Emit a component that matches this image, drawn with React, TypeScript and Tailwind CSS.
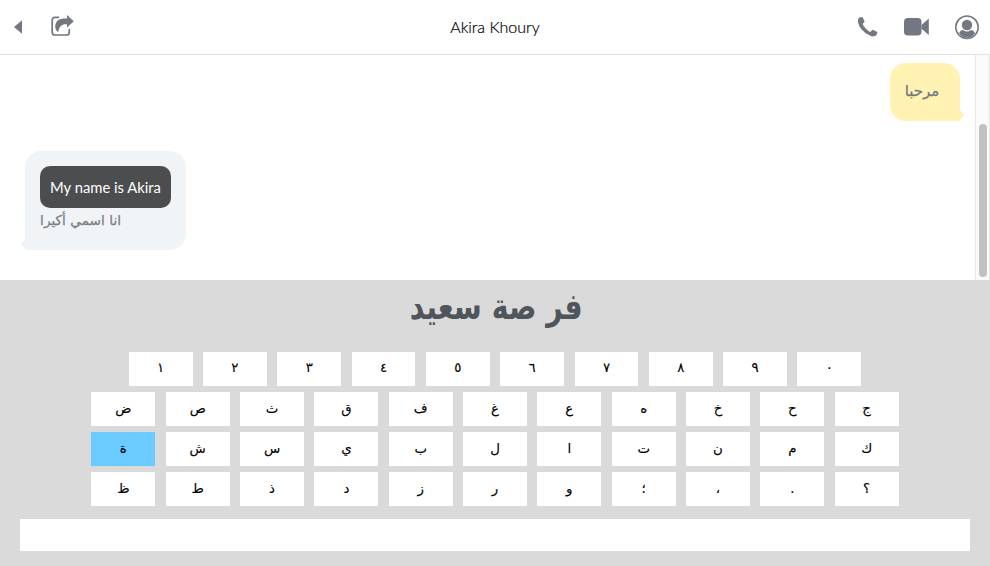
const rows = [
  ['١', '٢', '٣', '٤', '٥', '٦', '٧', '٨', '٩', '٠'],
  ['ض', 'ص', 'ث', 'ق', 'ف', 'غ', 'ع', 'ه', 'خ', 'ح', 'ج'],
  ['ة', 'ش', 'س', 'ي', 'ب', 'ل', 'ا', 'ت', 'ن', 'م', 'ك'],
  ['ظ', 'ط', 'ذ', 'د', 'ز', 'ر', 'و', '؛', '،', '.', '؟'],
];

function Header() {
  return (
    <header className="grid h-[55px] shrink-0 grid-cols-[1fr_auto_1fr] items-center border-b border-[#e2e2e2] bg-white text-[#727781]">
      <div className="flex items-center pl-[14px]">
        <svg width="8" height="14" viewBox="0 0 8 14" fill="currentColor">
          <path d="M8 0.3V13.7L0 7Z" />
        </svg>
        <svg className="ml-[29px] -mt-[2px]" width="23" height="22" viewBox="0 0 23 22">
          <path d="M7.5 2.3H4Q1.2 2.3 1.2 5.1V17.2Q1.2 20 4 20H15.5Q18.3 20 18.3 17.2V14.5" fill="none" stroke="currentColor" strokeWidth="1.7" strokeLinecap="round" />
          <path d="M16 0L22.8 6.3L16 12.6V9.3C11.5 8.8 8.6 10.2 7.1 17.3C3.4 14.5 3.3 8.5 6.8 5.5C9 3.6 12 3.3 16 3.4Z" fill="currentColor" />
        </svg>
      </div>
      <h1 className="font-['Lato'] text-[16px] font-light text-black [-webkit-text-stroke:0.2px_black]">Akira Khoury</h1>
      <div className="flex items-center justify-end pr-[11px]">
        <svg width="20" height="20" viewBox="0 0 20 20" fill="currentColor">
          <path d="M1 .8Q2.5.1 4.1.1Q4.7.3 6.4 4.1Q6.8 5 5.8 5.8Q4.7 6.6 4.7 7.1Q5 8.7 7.9 11.7Q11.1 14.8 12.3 14.8Q12.9 14.7 13.8 13.5Q14.6 12.6 15.3 12.9L18.8 14.8Q19.5 15.2 19.3 16.2Q18.8 18.2 17 18.9Q14.7 19.9 12.4 18.8Q7.5 17 3.7 12.4Q.4 8.4 0 5Q-.2 2 1 .8Z" />
        </svg>
        <svg className="ml-[26px]" width="25" height="18" viewBox="0 0 25 18" fill="currentColor">
          <rect width="17.5" height="17.5" rx="3.8" />
          <path d="M17.5 7L24.8 .5V17L17.5 10.8Z" />
        </svg>
        <svg className="ml-[26px]" width="24" height="25" viewBox="0 0 24 25">
          <circle cx="12" cy="12.3" r="11.2" fill="none" stroke="currentColor" strokeWidth="1.5" />
          <circle cx="12" cy="10" r="5.2" fill="currentColor" />
          <path d="M4 18.3C5 15.7 6.8 15 8.1 15Q12 18.1 15.9 15C17.5 15.1 19 15.8 20 18.3Q16.8 22.8 12 22.8T4 18.3Z" fill="currentColor" />
        </svg>
      </div>
    </header>
  );
}

function Conversation() {
  return (
    <main className="flex h-[225px] shrink-0 bg-white">
      <div className="flex flex-1 flex-col pt-2 pr-[15px] pl-[25px]">
        <div dir="rtl" lang="ar" className="relative flex h-[58px] w-[70px] items-center justify-center self-end rounded-[16px] rounded-br-none bg-[#fff2b3] pb-[2px] font-['DejaVu_Sans',sans-serif] text-[15px] text-[#727781] [-webkit-text-stroke:0.25px_#727781]">
          <span className="pr-[6px]">مرحبا</span>
          <svg className="absolute bottom-0 -right-[4px]" width="5" height="12" viewBox="0 0 5 12" fill="#fff2b3"><path d="M0 0L5 6L0 12Z" /></svg>
        </div>
        <div className="relative mt-[30px] h-[99px] w-[161px] rounded-[16px] rounded-bl-none bg-[#f0f4f7] px-[15px] pt-[15px]">
          <div className="flex h-[42px] w-[131px] items-center justify-center rounded-[10px] bg-[#4c4d4f] font-['Lato'] text-[14.8px] whitespace-nowrap text-white">My name is Akira</div>
          <div dir="rtl" lang="ar" className="w-[81px] font-['DejaVu_Sans',sans-serif] text-[13.7px] leading-[25px] whitespace-nowrap text-[#7b7d80] [-webkit-text-stroke:0.25px_#7b7d80]">انا اسمي أكيرا</div>
          <svg className="absolute bottom-0 -left-[4px]" width="5" height="12" viewBox="0 0 5 12" fill="#f0f4f7"><path d="M5 0L0 6L5 12Z" /></svg>
        </div>
      </div>
      <div className="flex w-[15px] flex-col items-center border-x border-[#e6e6e6] bg-[#fafafa] pt-[69px]">
        <div className="h-[153px] w-2 rounded-full bg-[#c1c1c1]" />
      </div>
    </main>
  );
}

export default function App() {
  return (
    <div className="flex h-[566px] w-[990px] flex-col overflow-hidden bg-[#dadada]">
      <Header />
      <Conversation />
      <section className="flex flex-1 flex-col items-center">
        <h2 dir="rtl" lang="ar" className="h-[72px] origin-center scale-x-[0.79] pl-[2px] font-['DejaVu_Sans',sans-serif] text-[36px] leading-[54px] font-bold whitespace-nowrap text-[#50555c]">فر صة سعيد</h2>
        <div className="flex flex-col items-center gap-[6px]">
          {rows.map((row, index) => (
            <div key={index} className={`flex ${index === 0 ? 'gap-[10.4375px]' : 'gap-[10.454px]'}`}>
              {row.map((letter) => (
                <button key={letter} lang="ar" className={`flex h-[34px] w-[63.875px] shrink-0 items-center justify-center font-['DejaVu_Sans',sans-serif] text-[13.333px] text-black [-webkit-text-stroke:0.15px_black] ${index === 0 ? 'pb-[2px]' : ''} ${letter === 'ة' ? 'bg-[#6bcaff]' : 'bg-white'}`}>{letter}</button>
              ))}
            </div>
          ))}
        </div>
        <input aria-label="Message" className="mt-[13px] h-8 w-[950px] bg-white px-2 outline-none" />
      </section>
    </div>
  );
}
